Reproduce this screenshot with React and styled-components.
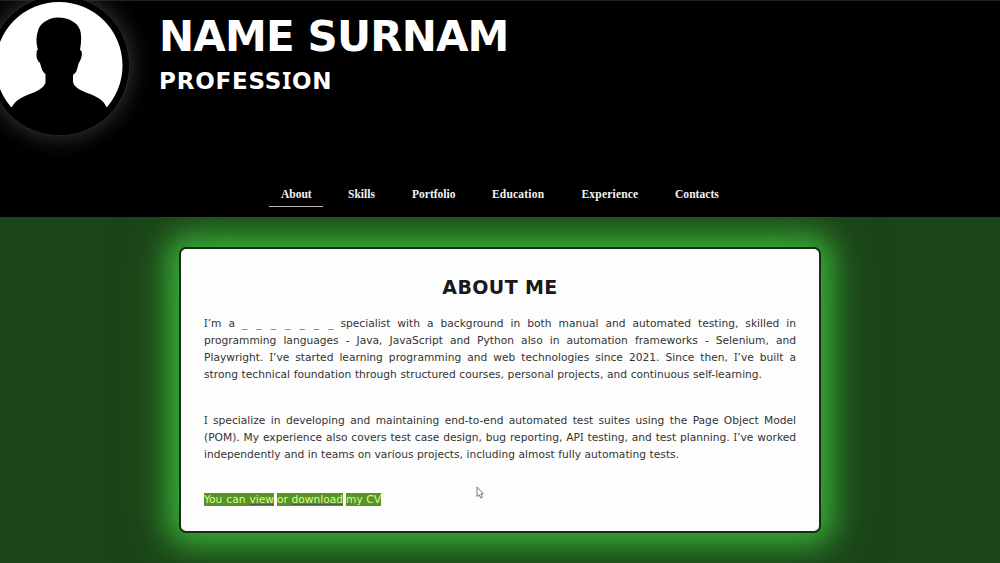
import React from 'react';
import styled, { createGlobalStyle } from 'styled-components';

const GlobalStyle = createGlobalStyle`
  body {
    margin: 0;
    overflow: hidden;
    background: #1b4418;
    font-family: 'DejaVu Sans', Verdana, sans-serif;
  }
`;

const Page = styled.div`
  display: flex;
  flex-direction: column;
  height: 563px;
  overflow: hidden;
`;

const Header = styled.header`
  display: flex;
  flex-direction: column;
  justify-content: space-between;
  box-sizing: border-box;
  height: 217px;
  border-top: 1px solid #202020;
  background: #000;
`;

const Intro = styled.div`
  display: flex;
  gap: 29px;
`;

const Avatar = styled.div`
  flex: none;
  box-sizing: border-box;
  width: 141px;
  height: 141px;
  margin: -6px 0 0 -11px;
  border: 1px solid #262626;
  border-radius: 50%;
  background: #000;
  box-shadow: 0 0 22px 2px #333;
  overflow: hidden;

  svg {
    display: block;
  }
`;

const Names = styled.div`
  padding-top: 11px;
`;

const Name = styled.h1`
  margin: 0;
  color: #fff;
  font-size: 42px;
  letter-spacing: -0.85px;
  line-height: 50px;
  white-space: nowrap;
`;

const Profession = styled.h2`
  margin: 0;
  padding-top: 4px;
  color: #fff;
  font-size: 23px;
  letter-spacing: 0.8px;
  line-height: 30px;
`;

const SerifI = styled.span`
  font-family: 'Noto Sans', sans-serif;
  line-height: 1;
`;

const Nav = styled.nav`
  display: flex;
  gap: 13px;
  padding: 0 0 10px 269px;
`;

const NavLink = styled.a`
  box-sizing: content-box;
  width: ${({ $width }) => $width}px;
  padding: 0 12px 3px;
  border-bottom: 1px solid ${({ $active }) => ($active ? '#b5b5b5' : 'transparent')};
  color: #f4f4f4;
  font: bold 11.5px/17px 'Liberation Serif', serif;
  letter-spacing: ${({ $spacing }) => $spacing || 0}px;
  white-space: nowrap;
`;

const Main = styled.main`
  flex: 1;
  padding: 30px 179px 0;
  overflow: hidden;
`;

const Card = styled.section`
  box-sizing: border-box;
  height: 286px;
  padding: 26px 23px 0;
  border: 2px solid #172b16;
  border-radius: 7px;
  background: #fdfdfd;
  box-shadow: 0 0 28px 10px #36ad35, 0 0 54px 10px #2a6b27;
`;

const CardTitle = styled.h2`
  margin: 0 0 16px;
  color: #191919;
  font-size: 19px;
  letter-spacing: 0.4px;
  line-height: 24px;
  text-align: center;
`;

const Paragraph = styled.p`
  margin: 0 0 29px;
  color: #333;
  font-size: 10.67px;
  line-height: 17px;
`;

const Line = styled.span`
  display: block;
  width: ${({ $width }) => ($width ? `${$width}px` : '100%')};
  text-align-last: justify;
  white-space: nowrap;
`;

const Blank = styled.span`
  color: #777;
  word-spacing: 2px;
`;

const CvRow = styled.div`
  display: flex;
  gap: 3px;
  padding-top: 1px;
  font-size: 10.67px;
  line-height: 13px;
`;

const CvLink = styled.a`
  width: ${({ $width }) => $width}px;
  background: #5b9227;
  color: #d3ff8c;
  text-align-last: justify;
  white-space: nowrap;

  u {
    text-decoration-color: #4d5a42;
  }
`;

const Pointer = styled.svg`
  position: absolute;
  left: 476px;
  top: 486px;
`;

const links = [
  { label: 'About', width: 30, active: true },
  { label: 'Skills', width: 27 },
  { label: 'Portfolio', width: 43 },
  { label: 'Education', width: 52.5, spacing: 0.2 },
  { label: 'Experience', width: 56.5, spacing: 0.2 },
  { label: 'Contacts', width: 44, spacing: 0.05 }
];

const Portrait = () => (
  <svg width="139" height="139" viewBox="-10 -4 139 139">
    <circle cx="59" cy="65.5" r="63.5" fill="#fff" />
    <path d="M-10 135V107H12C15 100 24 96 34 92.5C41 89 45 86 45.5 82V74C42 72 41 66 40 63C36 60 36 54 37 50H38C36 44 36 36 38 31C39 25 47 17.5 58 17.5C69 17.5 78 23 80 30C82 36 81 44 80 50C83 51 82 57 80 61C78 63 78 68 76 72L73 75V82C74 87 80 90 86 92.5C95 96 103 99 106.5 107H129V135Z" />
  </svg>
);

const App = () => (
  <Page>
    <GlobalStyle />
    <Header>
      <Intro>
        <Avatar>
          <Portrait />
        </Avatar>
        <Names>
          <Name>NAME SURNAM</Name>
          <Profession>
            PROFESS<SerifI>I</SerifI>ON
          </Profession>
        </Names>
      </Intro>
      <Nav>
        {links.map(({ label, width, spacing, active }) => (
          <NavLink key={label} $width={width} $spacing={spacing} $active={active}>
            {label}
          </NavLink>
        ))}
      </Nav>
    </Header>
    <Main>
      <Card>
        <CardTitle>ABOUT ME</CardTitle>
        <Paragraph>
          <Line>
            <SerifI>I</SerifI>’m a <Blank>_ _ _ _ _ _ _</Blank> specialist with a background in both manual and automated
            testing, skilled in
          </Line>
          <Line>programming languages - Java, JavaScript and Python also in automation frameworks - Selenium, and</Line>
          <Line>
            Playwright. <SerifI>I</SerifI>’ve started learning programming and web technologies since 2021. Since then,{' '}
            <SerifI>I</SerifI>’ve built a
          </Line>
          <Line $width={558}>
            strong technical foundation through structured courses, personal projects, and continuous self-learning.
          </Line>
        </Paragraph>
        <Paragraph>
          <Line>
            <SerifI>I</SerifI> specialize in developing and maintaining end-to-end automated test suites using the Page
            Object Model
          </Line>
          <Line>
            (POM). My experience also covers test case design, bug reporting, AP<SerifI>I</SerifI> testing, and test
            planning. <SerifI>I</SerifI>’ve worked
          </Line>
          <Line $width={475}>independently and in teams on various projects, including almost fully automating tests.</Line>
        </Paragraph>
        <CvRow>
          <CvLink $width={70}>
            You can <u>view</u>
          </CvLink>
          <CvLink $width={66}>
            or <u>download</u>
          </CvLink>
          <CvLink $width={35}>my CV</CvLink>
        </CvRow>
      </Card>
    </Main>
    <Pointer width="9" height="13" viewBox="0 0 9 13">
      <path d="M1 1V10.5L3 8.6L4.6 12L6.2 11.2L4.8 8H7.5Z" fill="#fff" stroke="#555" strokeWidth="0.8" />
    </Pointer>
  </Page>
);

export default App;
